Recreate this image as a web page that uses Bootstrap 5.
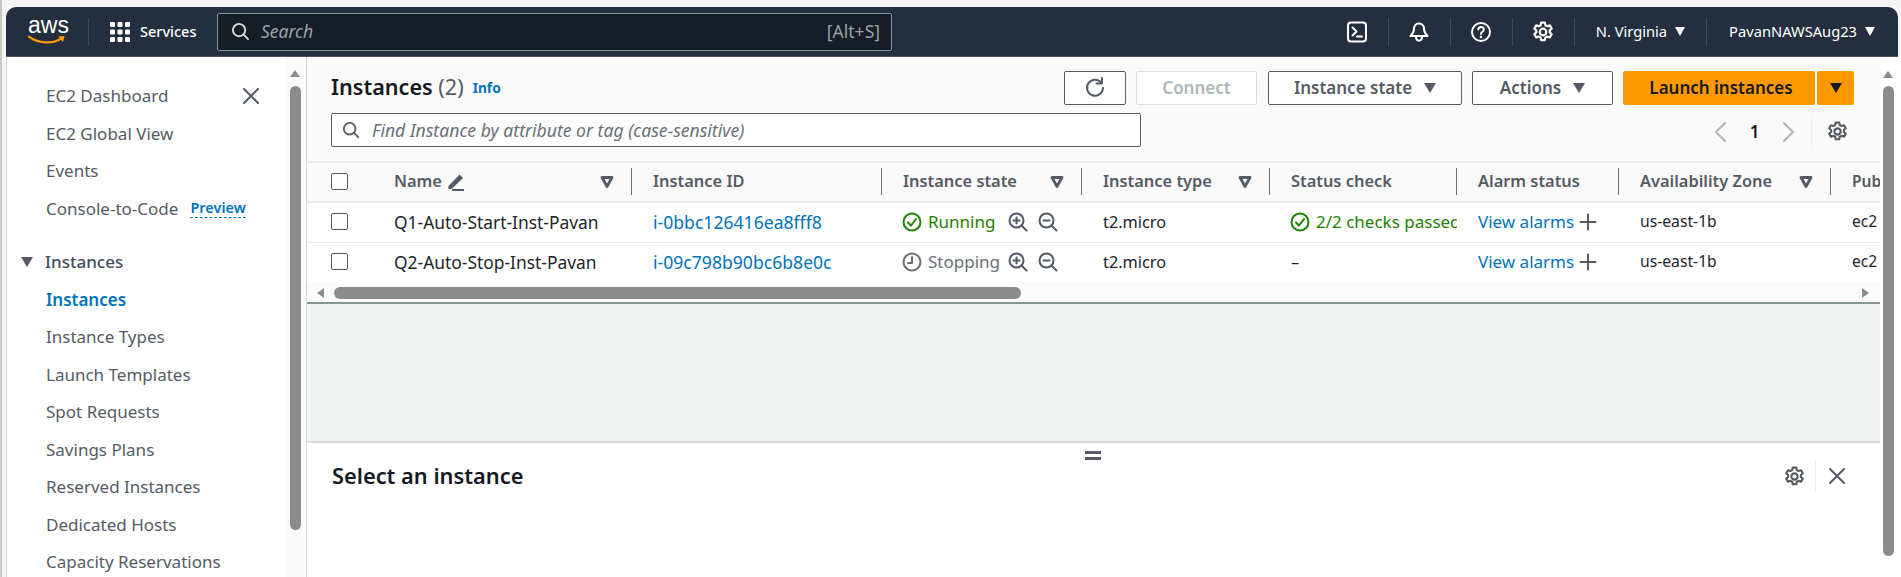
<!DOCTYPE html>
<html lang="en">
<head>
<meta charset="utf-8">
<title>Instances | EC2</title>
<link href="https://cdn.jsdelivr.net/npm/bootstrap@5.3.0/dist/css/bootstrap.min.css" rel="stylesheet">
<style>
html,body{height:577px;overflow:hidden;margin:0}
body{background:linear-gradient(90deg,#c8c8c8 2px,#f4f4f4 2px,#f4f4f4 6px,transparent 6px),linear-gradient(#f4f4f4 57px,#fff 57px);font-family:"Noto Sans","Open Sans",sans-serif;font-size:17px;color:#16191f;padding:7px 3px 0 6px}
svg{display:block;flex:none}
.stroke{fill:none;stroke:currentColor;stroke-width:2;stroke-linecap:round;stroke-linejoin:round}
.app-shell{height:570px;background:#fff}
.top-bar{height:50px;background:#232f3e;border-radius:10px 10px 0 0;color:#fff;border-bottom:1px solid #4a5560;padding-left:22px}
.logo-wrap{width:38px}
.aws-word{font-family:"Liberation Sans",sans-serif;font-size:23px;line-height:20px;display:block;text-align:center;margin-top:-3px}
.v-sep{width:1px;height:28px;background:#414d5c}
.v-sep-a{margin:0 21px 0 22px}
.svc{font-size:14.5px;font-weight:500;margin-left:10px;margin-right:20px;width:57px;white-space:nowrap}
.search-box{width:675px;height:38px;background:#161d26;border:1px solid #879596;border-radius:2px;padding:0 11px 0 13px;color:#d5dbdb}
.search-txt{font-style:italic;color:#95a5a6;margin-left:11px;font-size:17.5px}
.alt-hint{color:#95a5a6;font-size:17.5px}
.ic-cell{width:61px;justify-content:center}
.ic-sep{width:1px;height:28px;background:#414d5c}
.region{font-size:14.7px;white-space:nowrap}
.region-a{padding:0 21px 0 21px}
.region-b{padding:0 23px 0 22px}
.tri{width:0;height:0;border-left:5.5px solid transparent;border-right:5.5px solid transparent;border-top:9px solid currentColor;display:inline-block}
.body-row{height:520px}
.side-nav{width:279px;background:#fff;padding-top:20px;color:#545b64;font-size:17px;border-left:1px solid #dcdcdc}
.side-item{height:37.5px;padding-left:39px;white-space:nowrap}
.side-item.active-item{color:#0073bb;font-weight:600}
.preview-tag{color:#0073bb;font-size:14.5px;font-weight:600;margin-left:12px;border-bottom:1px dashed #0073bb;line-height:19px}
.close-nav{position:absolute;left:235px;top:30px;color:#545b64}
.side-group{margin-top:16px;padding-left:14px;font-weight:500;color:#414d5c}
.side-group .tri{margin-right:12px;border-left-width:6px;border-right-width:6px;border-top-width:10px;color:#545b64}
.sb-col{width:22px;background:#fafafa;border-right:1px solid #d5dbdb}
.sb-arrow{width:0;height:0;border-left:5.5px solid transparent;border-right:5.5px solid transparent;border-bottom:7px solid #8c8c8c;margin:13px auto 0 5px}
.sb-thumb{width:11px;background:#8c8c8c;border-radius:6px;margin:9px 0 0 5px;height:444px}
.main-area{width:1573px;min-width:0;background:#fff}
.list-panel{height:247px;background:#fafafa;border-bottom:2px solid #879596}
.head-zone{height:104px;padding:14px 26px 0 24px}
.page-title{font-size:21.6px;font-weight:600;color:#16191f;margin:-3px 0 0;line-height:30px}
.page-title span{font-weight:400;color:#545b64}
.info-link{color:#0073bb;font-size:13.7px;font-weight:700;margin-left:9px}
.aws-btn{height:34px;border:1px solid #545b64;border-radius:2px;background:#fff;color:#545b64;font-size:17px;font-weight:600;padding:0;display:flex;align-items:center;justify-content:center;white-space:nowrap}
.aws-btn .tri{border-left-width:6.5px;border-right-width:6.5px;border-top-width:10px}
.b-refresh{width:62px;margin-right:10px}
.b-connect{width:121px;margin-right:11px;border-color:#d5dbdb;color:#aab7b8}
.b-state{width:194px;margin-right:10px;gap:12px}
.b-actions{width:141px;margin-right:10px;gap:12px}
.b-launch{width:192px;background:#f90;border-color:#f90;color:#16191f;margin-right:2px;padding-left:4px}
.b-split{width:37px;background:#f90;border-color:#f90;color:#16191f}
.btn-row{height:34px}
.filter-row{height:34px;margin-top:8px}
.filter-box{width:810px;height:34px;border:1px solid #545b64;border-radius:2px;background:#fff;padding-left:10px;color:#545b64;font-style:italic;font-size:17.6px}
.filter-box span{margin-left:12px;color:#687078;white-space:nowrap}
.pager{margin-left:auto;height:34px;margin-top:3px}
.pg-arrow{color:#aab7b8}
.pg-num{width:55px;text-align:center;color:#16191f;font-weight:600}
.pg-sep{width:1px;height:28px;background:#eaeded;margin:0 15px}
.pg-gear{margin-right:6px;color:#545b64}
.grid-wrap{height:122px;overflow:hidden;border-top:2px solid #eaeded}
.ec2-table{table-layout:fixed;width:1650px;margin:0;--bs-table-bg:transparent;font-size:17.4px}
.ec2-table th,.ec2-table td{padding:0 0 1px 21px;vertical-align:middle;white-space:nowrap;overflow:hidden;border-bottom:0;box-shadow:none}
.ec2-table thead tr{height:39px;background:#fafafa;border-bottom:2px solid #eaeded}
.ec2-table tbody tr{height:40px;background:#fff;border-bottom:1px solid #eaeded}
.ec2-table tbody tr:last-child{border-bottom:0}
.ec2-table th{color:#545b64;font-weight:600;font-size:16.4px}
.ec2-table .plain-val{font-size:16.3px}
.ec2-table .az-val{font-size:15.7px}
.ec2-table .pub-val{font-size:15.5px}
.c0{width:66px}.c1{width:259px}.c2{width:250px}.c3{width:200px}.c4{width:188px}.c5{width:187px}.c6{width:162px}.c7{width:212px}.c8{width:126px}
.ec2-table th.c0,.ec2-table td.c0{padding-left:24px}
.chk{width:17px;height:17px;border:1px solid #545b64;border-radius:2px;background:#fff;display:block}
.th-in{display:flex;align-items:center;justify-content:space-between;padding-right:17px;height:27px;border-right:1px solid #687078}
.th-in.no-sep{border-right:0}
.th-name{display:flex;align-items:center;gap:5px}
.id-link{color:#0073bb;text-decoration:none;font-size:17px}
.id-big{font-size:17.6px}
.ok-text{color:#1d8102;font-size:17px}
.stop-text{color:#687078;font-size:17px}
.state-cell{display:flex;align-items:center;gap:6px;margin-left:-1px}
.c6 .state-cell{margin-left:0;gap:5px}
.zooms{display:flex;gap:10px;margin-left:auto;margin-right:24px;color:#545b64}
.plus-ic{color:#545b64}
.hs-row{height:19px;background:#fbfbfb;padding:0 11px 0 10px}
.hs-l{width:0;height:0;border-top:5.5px solid transparent;border-bottom:5.5px solid transparent;border-right:7px solid #8c8c8c;margin-right:10px}
.hs-r{width:0;height:0;border-top:5.5px solid transparent;border-bottom:5.5px solid transparent;border-left:7px solid #8c8c8c;margin-left:auto}
.hs-thumb{width:687px;height:12px;background:#8c8c8c;border-radius:6px}
.gap-zone{height:139px;background:#f2f3f3;border-bottom:2px solid #d5dbdb}
.detail-zone{height:134px;background:#fff;position:relative;padding:18px 34px 0 25px}
.grip{position:absolute;left:778px;top:8px;width:16px;height:9px;border-top:3px solid #545b64;border-bottom:3px solid #545b64}
.detail-title{font-size:21.8px;font-weight:600;margin:0;line-height:28px;color:#16191f}
.detail-tools{color:#545b64}
.dt-sep{width:1px;height:30px;background:#eaeded;margin:0 12px 0 10px}
.page-sb{width:18px;background:#fff;flex:none;padding-left:3px}
.page-sb .sb-arrow{margin:14px 0 0 0}
.page-sb .sb-thumb{margin:8px 0 0 0;height:470px}
</style>
</head>
<body>
<svg width="0" height="0" class="position-absolute">
 <defs>
  <symbol id="gear" viewBox="0 0 20 20"><path class="stroke" d="M8.300 1.500h3.400l.5 2.400 1.700.9 2.300-.8 1.700 2.900-1.800 1.600v1.900l1.800 1.600-1.700 2.900-2.300-.8-1.700.9-.5 2.400H8.300l-.5-2.400-1.700-.9-2.300.8-1.700-2.900 1.800-1.600V8.500L2.100 6.900 3.800 4l2.300.8 1.700-.9z"/><circle class="stroke" cx="10" cy="10" r="3"/></symbol>
  <symbol id="funnel" viewBox="0 0 14 14"><path d="M2 2.500h10L7 11.500z" fill="none" stroke="currentColor" stroke-width="2.800" stroke-linejoin="round"/></symbol>
  <symbol id="zoomin" viewBox="0 0 20 20"><circle class="stroke" cx="8.500" cy="8.500" r="7"/><path class="stroke" d="M13.500 13.500 18.500 18.500M8.500 5.500v6M5.500 8.500h6"/></symbol>
  <symbol id="zoomout" viewBox="0 0 20 20"><circle class="stroke" cx="8.500" cy="8.500" r="7"/><path class="stroke" d="M13.500 13.500 18.500 18.500M5.500 8.500h6"/></symbol>
  <symbol id="xmark" viewBox="0 0 18 18"><path class="stroke" d="M2 2 16 16M16 2 2 16"/></symbol>
  <symbol id="search" viewBox="0 0 20 20"><circle class="stroke" cx="8.500" cy="8.500" r="6.500"/><path class="stroke" d="M13.300 13.300 18 18"/></symbol>
  <symbol id="plus" viewBox="0 0 18 18"><path class="stroke" d="M9 1.500v15M1.500 9h15"/></symbol>
 </defs>
</svg>
<div class="app-shell d-flex flex-column">
 <header class="top-bar d-flex align-items-center">
  <div class="logo-wrap">
   <span class="aws-word">aws</span>
   <svg width="38" height="11" viewBox="0 0 39 11"><path d="M1 1.500C10 8.500 25 9.500 34 3.500" fill="none" stroke="#f90" stroke-width="2.200" stroke-linecap="round"/><path d="M31 1.500 37.500 1 36 7z" fill="#f90"/></svg>
  </div>
  <div class="v-sep v-sep-a"></div>
  <svg width="20" height="20" viewBox="0 0 20 20" fill="#fff"><rect x="0" y="0" width="5" height="5" rx="1"/><rect x="7.500" y="0" width="5" height="5" rx="1"/><rect x="15" y="0" width="5" height="5" rx="1"/><rect x="0" y="7.500" width="5" height="5" rx="1"/><rect x="7.500" y="7.500" width="5" height="5" rx="1"/><rect x="15" y="7.500" width="5" height="5" rx="1"/><rect x="0" y="15" width="5" height="5" rx="1"/><rect x="7.500" y="15" width="5" height="5" rx="1"/><rect x="15" y="15" width="5" height="5" rx="1"/></svg>
  <span class="svc">Services</span>
  <div class="search-box d-flex align-items-center">
   <svg width="19" height="19"><use href="#search"/></svg>
   <span class="search-txt">Search</span>
   <span class="alt-hint ms-auto">[Alt+S]</span>
  </div>
  <div class="d-flex align-items-center ms-auto">
   <div class="d-flex ic-cell"><svg width="22" height="22" viewBox="0 0 22 22"><rect class="stroke" x="2" y="1.500" width="18" height="19" rx="3"/><path class="stroke" d="M6.500 6.500 10.500 10.500 6.500 14.500M11 15.500h5"/></svg></div>
   <div class="ic-sep"></div>
   <div class="d-flex ic-cell"><svg width="22" height="22" viewBox="0 0 22 22"><path class="stroke" d="M11 2.500c-3.300 0-5 2.700-5 5.500 0 3.200-1.500 5-3.500 7h17c-2-2-3.500-3.800-3.500-7 0-2.800-1.700-5.500-5-5.500zM8 15.500c0 5.500 6 5.500 6 0"/></svg></div>
   <div class="ic-sep"></div>
   <div class="d-flex ic-cell"><svg width="22" height="22" viewBox="0 0 22 22"><circle class="stroke" cx="11" cy="11" r="9"/><path class="stroke" d="M8.300 8.500c0-3.500 5.500-3.500 5.500 0 0 2.200-2.800 2.200-2.800 4.500"/><circle cx="11" cy="16" r="1.300" fill="currentColor"/></svg></div>
   <div class="ic-sep"></div>
   <div class="d-flex ic-cell"><svg width="22" height="22"><use href="#gear"/></svg></div>
   <div class="ic-sep"></div>
   <div class="d-flex align-items-center region region-a"><span>N. Virginia</span><span class="tri ms-2"></span></div>
   <div class="ic-sep"></div>
   <div class="d-flex align-items-center region region-b"><span>PavanNAWSAug23</span><span class="tri ms-2"></span></div>
  </div>
 </header>
 <div class="body-row d-flex">
  <nav class="side-nav position-relative">
   <div class="side-item d-flex align-items-center">EC2 Dashboard</div>
   <svg class="close-nav" width="18" height="18" viewBox="0 0 18 18"><use href="#xmark"/></svg>
   <div class="side-item d-flex align-items-center">EC2 Global View</div>
   <div class="side-item d-flex align-items-center">Events</div>
   <div class="side-item d-flex align-items-center">Console-to-Code<span class="preview-tag">Preview</span></div>
   <div class="side-item side-group d-flex align-items-center"><span class="tri"></span>Instances</div>
   <div class="side-item active-item d-flex align-items-center">Instances</div>
   <div class="side-item d-flex align-items-center">Instance Types</div>
   <div class="side-item d-flex align-items-center">Launch Templates</div>
   <div class="side-item d-flex align-items-center">Spot Requests</div>
   <div class="side-item d-flex align-items-center">Savings Plans</div>
   <div class="side-item d-flex align-items-center">Reserved Instances</div>
   <div class="side-item d-flex align-items-center">Dedicated Hosts</div>
   <div class="side-item d-flex align-items-center">Capacity Reservations</div>
  </nav>
  <div class="sb-col"><div class="sb-arrow"></div><div class="sb-thumb"></div></div>
  <main class="main-area d-flex flex-column">
   <section class="list-panel d-flex flex-column">
    <div class="head-zone">
     <div class="btn-row d-flex align-items-center">
      <h1 class="page-title">Instances <span>(2)</span></h1>
      <a class="info-link text-decoration-none">Info</a>
      <div class="d-flex ms-auto">
       <button class="btn aws-btn b-refresh" type="button" aria-label="Refresh"><svg width="22" height="22" viewBox="0 0 22 22"><path class="stroke" d="M17.500 6A8 8 0 1 0 19 11"/><path class="stroke" d="M12.500 6.500H18V1"/></svg></button>
       <button class="btn aws-btn b-connect" type="button">Connect</button>
       <button class="btn aws-btn b-state" type="button">Instance state <span class="tri"></span></button>
       <button class="btn aws-btn b-actions" type="button">Actions <span class="tri"></span></button>
       <button class="btn aws-btn b-launch" type="button">Launch instances</button>
       <button class="btn aws-btn b-split" type="button" aria-label="More"><span class="tri"></span></button>
      </div>
     </div>
     <div class="filter-row d-flex align-items-center">
      <div class="filter-box d-flex align-items-center"><svg width="18" height="18"><use href="#search"/></svg><span>Find Instance by attribute or tag (case-sensitive)</span></div>
      <div class="pager d-flex align-items-center">
       <svg width="14" height="22" viewBox="0 0 14 22" class="pg-arrow"><path class="stroke" d="M12 2 3 11l9 9"/></svg>
       <span class="pg-num">1</span>
       <svg width="14" height="22" viewBox="0 0 14 22" class="pg-arrow"><path class="stroke" d="m2 2 9 9-9 9"/></svg>
       <div class="pg-sep"></div>
       <svg class="pg-gear" width="21" height="21"><use href="#gear"/></svg>
      </div>
     </div>
    </div>
    <div class="grid-wrap">
     <table class="table ec2-table">
      <thead><tr>
       <th class="c0"><span class="chk"></span></th>
       <th class="c1"><div class="th-in"><span class="th-name">Name <svg width="18" height="20" viewBox="0 0 18 20"><path d="M1.500 15 12.500 3.500l3.500 3.500L4.500 18H1.500z" fill="currentColor"/><path d="M5 19h12" stroke="currentColor" stroke-width="2"/></svg></span><svg width="14" height="14"><use href="#funnel"/></svg></div></th>
       <th class="c2"><div class="th-in">Instance ID</div></th>
       <th class="c3"><div class="th-in">Instance state<svg width="14" height="14"><use href="#funnel"/></svg></div></th>
       <th class="c4"><div class="th-in">Instance type<svg width="14" height="14"><use href="#funnel"/></svg></div></th>
       <th class="c5"><div class="th-in">Status check</div></th>
       <th class="c6"><div class="th-in">Alarm status</div></th>
       <th class="c7"><div class="th-in">Availability Zone<svg width="14" height="14"><use href="#funnel"/></svg></div></th>
       <th class="c8 pub-val"><div class="th-in no-sep">Pub</div></th>
      </tr></thead>
      <tbody>
       <tr>
        <td class="c0"><span class="chk"></span></td>
        <td class="c1">Q1-Auto-Start-Inst-Pavan</td>
        <td class="c2"><a class="id-link id-big">i-0bbc126416ea8fff8</a></td>
        <td class="c3"><div class="state-cell ok-text"><svg width="20" height="20" viewBox="0 0 20 20"><circle class="stroke" cx="10" cy="10" r="8.500"/><path class="stroke" d="m6 10.500 3 3 5-6.500"/></svg>Running<span class="zooms"><svg width="20" height="20"><use href="#zoomin"/></svg><svg width="20" height="20"><use href="#zoomout"/></svg></span></div></td>
        <td class="c4 plain-val">t2.micro</td>
        <td class="c5"><div class="state-cell ok-text"><svg width="20" height="20" viewBox="0 0 20 20"><circle class="stroke" cx="10" cy="10" r="8.500"/><path class="stroke" d="m6 10.500 3 3 5-6.500"/></svg>2/2 checks passed</div></td>
        <td class="c6"><div class="state-cell"><a class="id-link">View alarms</a><svg width="18" height="18" class="plus-ic"><use href="#plus"/></svg></div></td>
        <td class="c7 az-val">us-east-1b</td>
        <td class="c8 pub-val">ec2</td>
       </tr>
       <tr>
        <td class="c0"><span class="chk"></span></td>
        <td class="c1">Q2-Auto-Stop-Inst-Pavan</td>
        <td class="c2"><a class="id-link id-big">i-09c798b90bc6b8e0c</a></td>
        <td class="c3"><div class="state-cell stop-text"><svg width="20" height="20" viewBox="0 0 20 20"><circle class="stroke" cx="10" cy="10" r="8.500"/><path class="stroke" d="M10 5v6H6"/></svg>Stopping<span class="zooms"><svg width="20" height="20"><use href="#zoomin"/></svg><svg width="20" height="20"><use href="#zoomout"/></svg></span></div></td>
        <td class="c4 plain-val">t2.micro</td>
        <td class="c5 plain-val">–</td>
        <td class="c6"><div class="state-cell"><a class="id-link">View alarms</a><svg width="18" height="18" class="plus-ic"><use href="#plus"/></svg></div></td>
        <td class="c7 az-val">us-east-1b</td>
        <td class="c8 pub-val">ec2</td>
       </tr>
      </tbody>
     </table>
    </div>
    <div class="hs-row d-flex align-items-center"><div class="hs-l"></div><div class="hs-thumb"></div><div class="hs-r"></div></div>
   </section>
   <div class="gap-zone"></div>
   <section class="detail-zone">
    <div class="grip"></div>
    <div class="d-flex align-items-center">
     <h2 class="detail-title">Select an instance</h2>
     <div class="detail-tools d-flex align-items-center ms-auto"><svg width="21" height="21"><use href="#gear"/></svg><div class="dt-sep"></div><svg width="18" height="18"><use href="#xmark"/></svg></div>
    </div>
   </section>
  </main>
  <div class="page-sb"><div class="sb-arrow"></div><div class="sb-thumb"></div></div>
 </div>
</div>
<script src="https://cdn.jsdelivr.net/npm/bootstrap@5.3.0/dist/js/bootstrap.bundle.min.js"></script>
</body>
</html>
